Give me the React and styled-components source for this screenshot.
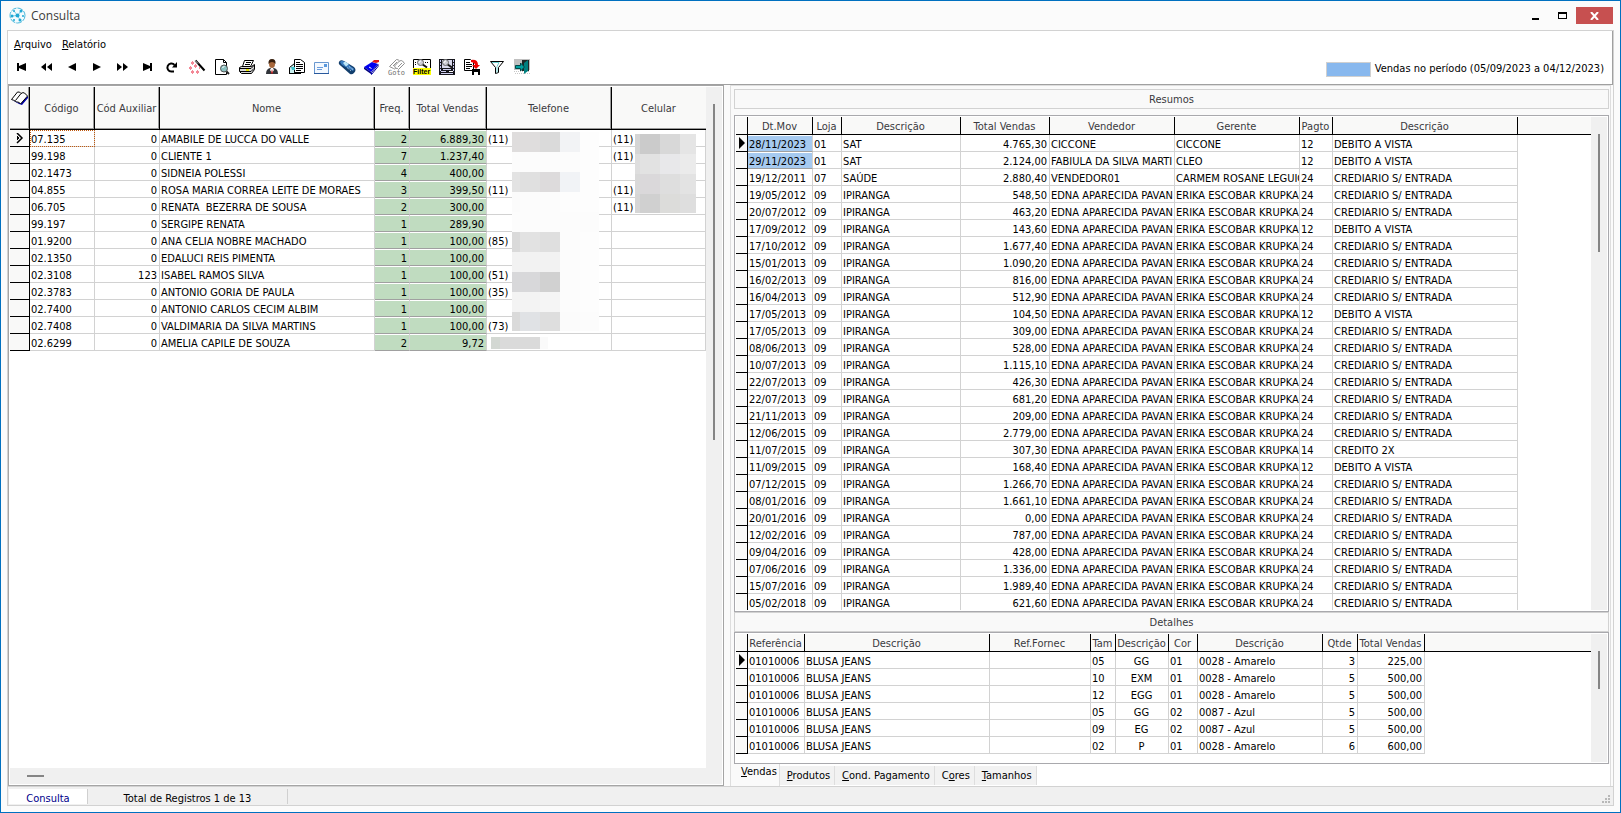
import { styled, createGlobalStyle } from 'styled-components';

const GlobalStyle = createGlobalStyle`
  *, *::before, *::after {
    box-sizing: border-box;
  }
  html, body, #root {
    height: 100%;
    margin: 0;
  }
  body {
    font-family: 'DejaVu Sans Condensed', 'Noto Sans', sans-serif;
    font-size: 11px;
    line-height: 16px;
    color: #000;
    background: #fbfbfb;
    overflow: hidden;
  }
  button {
    font: inherit;
    color: inherit;
    background: none;
    border: 0;
    padding: 0;
    margin: 0;
    cursor: default;
  }
`;

const Window = styled.div`
  display: flex;
  flex-direction: column;
  height: 100vh;
  padding: 0 6px 6px;
  border: 1px solid #0070c0;
  background: #fbfbfb;
`;

const TitleBar = styled.header`
  display: flex;
  align-items: center;
  flex: none;
  height: 29px;
  padding-left: 2px;
  gap: 5px;
`;

const Title = styled.h1`
  flex: 1;
  margin: 0;
  font-family: 'Open Sans', 'Noto Sans', sans-serif;
  font-size: 12px;
  font-weight: 400;
  color: #3c3c3c;
`;

const WindowButton = styled.button`
  display: flex;
  align-items: center;
  justify-content: center;
  width: ${({ $close }) => ($close ? 37 : 27)}px;
  height: 17px;
  background: ${({ $close }) => ($close ? '#c75050' : 'transparent')};
`;

const WindowButtons = styled.div`
  display: flex;
  padding-right: 1px;
`;

const Frame = styled.main`
  display: flex;
  flex-direction: column;
  flex: 1;
  min-height: 0;
  border: 1px solid #d2d2d2;
`;

const TopArea = styled.div`
  display: flex;
  justify-content: space-between;
  flex: none;
  height: 54px;
  background: #fff;
  border-right: 1px solid #a0a0a0;
  border-bottom: 1px solid #a0a0a0;
`;

const MenuBar = styled.nav`
  display: flex;
  gap: 10px;
  padding: 6px 0 1px 6px;
`;

const ToolBar = styled.div`
  display: flex;
`;

const ToolButton = styled.button`
  display: flex;
  align-items: center;
  justify-content: center;
  width: 25px;
  height: 26px;
  padding-left: 3px;
`;

const Legend = styled.div`
  display: flex;
  align-items: center;
  gap: 4px;
  padding: 23px 8px 0 0;
`;

const Swatch = styled.span`
  width: 45px;
  height: 15px;
  background: #88b8ee;
  border: 1px solid #d0d0d0;
`;

const Workspace = styled.div`
  display: flex;
  flex: 1;
  min-height: 0;
`;

const ClientPanel = styled.section`
  display: flex;
  flex-direction: column;
  flex: 0 0 716px;
  border: 1px solid #a5a5a5;
  padding: 1px;
  background: #fff;
`;

const SalesPanel = styled.section`
  display: flex;
  flex-direction: column;
  flex: 1;
  min-width: 0;
  margin: 0 2px 0 6px;
  padding: 3px 1px 0 3px;
  border: solid #dedede;
  border-width: 1px 1px 0;
  background: #fafafa;
`;

const PanelTitle = styled.h2`
  flex: none;
  height: 20px;
  margin: 0 0 ${({ $gap }) => $gap || 0}px;
  padding-top: 2px;
  border: 1px solid #d2d2d2;
  background: #f9f9f9;
  font-size: 11px;
  font-weight: 400;
  text-align: center;
  color: #3a3a40;
`;

const GridBox = styled.div`
  display: flex;
  flex: ${({ $height }) => ($height ? `0 0 ${$height}px` : '1')};
  min-height: 0;
  padding: 1px;
  border: 1px solid #a9a9ad;
  background: #fff;
`;

const GridArea = styled.div`
  position: relative;
  display: flex;
  flex: 1;
  min-height: 0;
`;

const GridView = styled.div`
  position: relative;
  flex: 1;
  min-width: 0;
  overflow: hidden;
`;

const Table = styled.table`
  width: 100%;
  table-layout: fixed;
  border-collapse: separate;
  border-spacing: 0;
`;

const Th = styled.th`
  height: ${({ $tall }) => ($tall ? 43 : 18)}px;
  padding: ${({ $mark }) => ($mark ? '4px 0 0' : '1px 1px 0 0')};
  overflow: hidden;
  background: #f9f9f8;
  border-right: ${({ $last }) => ($last ? '0' : '1px solid #000')};
  border-bottom: 1px solid #000;
  box-shadow: ${({ $tall, $last }) =>
    $tall ? `inset ${$last ? 0 : -1}px -1px #9a9a9a` : 'none'};
  font-weight: 400;
  line-height: 15px;
  white-space: nowrap;
  vertical-align: ${({ $mark }) => ($mark ? 'top' : 'middle')};
  color: #3a3a40;
`;

const cellColors = {
  green: '#c0dcc0',
  blue: '#a6caf0',
};

const Td = styled.td`
  height: 17px;
  padding: 3px 2px 0 1px;
  overflow: hidden;
  background: ${({ $tone }) => cellColors[$tone] || 'transparent'};
  border-right: 1px solid #d2d2d2;
  border-bottom: 1px solid ${({ $tone }) => ($tone ? '#a0a0a0' : '#d2d2d2')};
  box-shadow: ${({ $tone }) => ($tone ? 'inset 0 1px #fff' : 'none')};
  outline: ${({ $focused }) => ($focused ? '1px dotted #c05a10' : 'none')};
  outline-offset: -1px;
  line-height: 13px;
  text-align: ${({ $align }) => $align || 'left'};
  white-space: pre;
`;

const MarkCell = styled.td`
  height: 17px;
  padding: 0;
  background: #f9f9f8;
  border-right: 1px solid #000;
  border-bottom: 1px solid #000;
  line-height: 0;
  text-align: right;
`;

const ScrollTrack = styled.div`
  flex: none;
  width: 16px;
  padding: 17px 0 0 7px;
  background: #f0f0f0;
`;

const ScrollThumb = styled.div`
  width: 2px;
  height: ${({ $length }) => $length}px;
  background: #858585;
`;

const BottomTrack = styled.div`
  flex: none;
  height: 16px;
  padding: 7px 0 0 17px;
  background: #f0f0f0;
`;

const BottomThumb = styled.div`
  width: 17px;
  height: 2px;
  background: #858585;
`;

const Mosaic = styled.svg`
  position: absolute;
  left: ${({ $left }) => $left}px;
  top: ${({ $top }) => $top}px;
`;

const Tabs = styled.div`
  display: flex;
  flex: none;
  height: 22px;
  margin: 0 -1px 0 -3px;
  background: #fff;
`;

const Tab = styled.button`
  height: ${({ $active }) => ($active ? 22 : 19)}px;
  margin-top: ${({ $active }) => ($active ? 0 : 2)}px;
  padding: ${({ $active }) => ($active ? '0 2px 6px 10px' : '0 4px 0 7px')};
  border-right: 1px solid #dedede;
  background: ${({ $active }) => ($active ? '#fafafa' : '#f2f2f2')};
`;

const StatusBar = styled.footer`
  display: flex;
  flex: none;
  height: 19px;
  padding: 2px 0 1px 1px;
  border-top: 1px solid #d2d2d2;
  background: #f0f0f0;
`;

const StatusItem = styled.span`
  width: ${({ $width }) => $width}px;
  padding-top: 2px;
  line-height: 16px;
  border-right: 1px solid #d0d0d0;
  text-align: center;
  color: ${({ $current }) => ($current ? '#00008b' : '#000')};
  background: ${({ $current }) => ($current ? '#fff' : 'transparent')};
`;

const Grip = styled.svg`
  align-self: flex-end;
  margin: 0 2px 0 auto;
`;

const IconArt = styled.svg`
  flex: none;
  overflow: visible;
`;

const Icon = ({ children }) => (
  <IconArt width="16" height="16" viewBox="0 0 16 16" aria-hidden="true">
    {children}
  </IconArt>
);

const Lens = () => (
  <>
    <path d="M8 5l5 3.500" stroke="#111" strokeWidth="2" />
    <circle cx="6.500" cy="3.500" r="3" fill="#cdcdd6" stroke="#666" />
    <path d="M5 4q0-2 2-2" fill="none" stroke="#fff" />
  </>
);

const tools = [
  { label: 'Primeiro', art: <path d="M3 4h2v3l7-3v8l-7-3v3H3z" /> },
  { label: 'Voltar página', art: <path d="M2 8l5-4v8zM8 8l5-4v8z" /> },
  { label: 'Anterior', art: <path d="M4 8l8-4v8z" /> },
  { label: 'Próximo', art: <path d="M12 8L4 4v8z" /> },
  { label: 'Avançar página', art: <path d="M8 8L3 4v8zM14 8L9 4v8z" /> },
  { label: 'Último', art: <path d="M13 4h-2v3L4 4v8l7-3v3h2z" /> },
  {
    label: 'Atualizar',
    art: (
      <>
        <path d="M10 12.500H7.500a4 4 0 1 1 3-6.500" fill="none" stroke="#000" strokeWidth="2" />
        <path d="M13 3v5.500H8z" />
      </>
    ),
  },
  {
    label: 'Assistente',
    art: (
      <>
        <path d="M6.500 1.500l9 10" stroke="#000" strokeWidth="2" />
        <path d="M6 1.500l3 3" stroke="#d8d8d8" strokeWidth="1" />
        <path
          d="M3 3h1M2 4h1M4 4h1M3 5h1M6 6h1M5 7h1M7 7h1M6 8h1M1 8h1M0 9h1M2 9h1M1 10h1M10 9h1M3 12h1M2 13h1M4 13h1M3 14h1M8 12h1M7 13h1M9 13h1M8 14h1"
          stroke="#e8102c"
        />
      </>
    ),
  },
  {
    label: 'Visualizar',
    art: (
      <>
        <path d="M1.500.500h8l3 3v12h-11z" fill="#fff" stroke="#000" />
        <path d="M9.500.500v3h3" fill="none" stroke="#000" />
        <path d="M12 12l3 3" stroke="#222" strokeWidth="2" />
        <circle cx="10" cy="9.500" r="3.500" fill="#8ac0c0" stroke="#555" />
        <path d="M8.500 9q.500-1.500 2-1.500" fill="none" stroke="#fff" />
      </>
    ),
  },
  {
    label: 'Imprimir',
    art: (
      <>
        <path d="M5.500 1.500h9l-3 6h-8z" fill="#fff" stroke="#000" />
        <path d="M7 3.500h5M6 5.500h5" stroke="#000" />
        <path d="M.500 8.500l2-1h10l3-2v5l-3 4h-10l-2-2z" fill="#d8d8d8" stroke="#000" />
        <path d="M1 9.500h11l3-3M1 12.500h11l3-3" fill="none" stroke="#000" />
        <path d="M7 11h3" stroke="#e8e800" strokeWidth="2" />
      </>
    ),
  },
  {
    label: 'Cliente',
    art: (
      <>
        <path d="M2 15q0-5 4-6h4q4 1 4 6z" fill="#30343a" />
        <path d="M7 9h2l1 2-2 3-2-3z" fill="#fff" />
        <path d="M8 10l1 4-1 1-1-1z" fill="#c02020" />
        <ellipse cx="8" cy="5" rx="3" ry="4" fill="#a8683c" />
        <path d="M4.500 5Q4 0 8 0t3.500 5Q10 3 8 3T4.500 5z" fill="#38200f" />
      </>
    ),
  },
  {
    label: 'Relatório',
    art: (
      <>
        <path d="M.500 8.500l5-4v10h-5z" fill="#c8f0f0" stroke="#000" />
        <path d="M5.500.500h6l4 3v10h-10z" fill="#fff" stroke="#000" />
        <path d="M7 3.500h4M7 5.500h7M7 7.500h7M7 9.500h7M7 11.500h5" stroke="#000" />
        <path d="M0 14.500h12" stroke="#000" />
        <path d="M2 8h4v3H3z" fill="#40c0c8" />
      </>
    ),
  },
  {
    label: 'E-mail',
    art: (
      <>
        <path d="M.500 3.500h14v11H.500z" fill="#f4f9ff" stroke="#6a98d0" />
        <path d="M0 14.500h15" stroke="#28589c" />
        <path d="M3 8.500h6M3 10.500h5" stroke="#6a9cdc" />
        <path d="M10 5h3v3h-3z" fill="#5a98dc" />
      </>
    ),
  },
  {
    label: 'Telefone',
    art: (
      <>
        <path d="M0 3q1-3 5-1l10 6q3 3 0 6-2 2-4 1L2 7Q-1 5 0 3z" fill="#123e6c" />
        <path d="M1 3q2-2 4-.500L14 9q2 1 0 3L3 6z" fill="#3a7cc0" />
        <path d="M4 4l2-1.500L10 5 7 7.500z" fill="#c0e8f8" />
        <path d="M8 8.500l4 3.500M10 7.500l4 3" stroke="#c8e0f4" strokeDasharray="1 1" />
      </>
    ),
  },
  {
    label: 'Catálogo',
    art: (
      <>
        <path d="M0 8l8-5 6 2-7 8z" fill="#0000f0" />
        <path d="M0 8v2l7 5v-2z" fill="#000080" />
        <path d="M7.500 13.500l6.500-8v2l-6.500 8z" fill="#fff" stroke="#0000a0" />
        <path d="M8 3l2-2h5v2l-3 1z" fill="#e01818" />
        <path d="M5 8l2.500 1.500" stroke="#fff" />
      </>
    ),
  },
  {
    label: 'Ir para',
    art: (
      <>
        <path
          d="M.500 7.500l7-7q2 0 3 1.500 2-1 3 0l2 2.500-6 6q-1-2-3-1-1 1-2 0-2-1-4-2z"
          fill="#fff"
          stroke="#909090"
        />
        <path d="M10.500 2l-5 5 1 2M8 3L4 7M13 4L9 8" fill="none" stroke="#909090" />
        <text x="-1" y="16" fontSize="7" fontFamily="DejaVu Sans Mono" fill="#707070">
          Goto
        </text>
      </>
    ),
  },
  {
    label: 'Filtrar',
    art: (
      <>
        <path d="M-.500.500h17v9h-17z" fill="#fff" stroke="#000" />
        <path d="M1 3.500h2M1 5.500h2M11 3.500h4" stroke="#000" strokeDasharray="1 1" />
        <Lens />
        <path d="M-1 9h18v7H-1z" fill="#ff0" />
        <text x="-1" y="15" fontSize="7" fontWeight="700" fontFamily="Liberation Sans">
          Filter
        </text>
      </>
    ),
  },
  {
    label: 'Pesquisar',
    art: (
      <>
        <path d="M0 0h16v16H0z" fill="#15151c" />
        <path d="M1.500 1v11M14.500 1v11" stroke="#c8c8f0" strokeDasharray="2 1" />
        <path d="M3 1h10v8H3z" fill="#d8d8ec" />
        <Lens />
        <path d="M4 10.500h8M2 12.500h5M2 14.500h12" stroke="#d0d0f0" />
        <path d="M10 12.500h4" stroke="#fff" />
      </>
    ),
  },
  {
    label: 'Salvar',
    art: (
      <>
        <path d="M.500.500h6l3 3v8h-9z" fill="#fff" stroke="#000" />
        <path d="M2 3.500h4M2 5.500h6M2 7.500h6M2 9.500h4" stroke="#000" />
        <path d="M7 1q7-1 7 5h2l-4 4-4-4h3q0-2-4-3z" fill="#f00000" />
        <path d="M8 10h8v6H8z" />
        <path d="M10 13h4v3h-4z" fill="#fff" />
      </>
    ),
  },
  {
    label: 'Filtro',
    art: (
      <>
        <path d="M1.500 2.500h13l-5 6v5l-3 1v-6z" fill="#fff" stroke="#000" />
        <path d="M3 3.500h7l-2 4v6" fill="none" stroke="#70d0d0" />
      </>
    ),
  },
  {
    label: 'Sair',
    art: (
      <>
        <path d="M0 0h16v11H0z" fill="#c0c0c0" />
        <path d="M0 12.500h16M1 14.500h15" stroke="#c8c8c8" strokeDasharray="1 1" />
        <path d="M8 1h7v11H8z" fill="#202828" />
        <path d="M10 4l4-3v11l-4 3z" fill="#008080" />
        <path d="M1.500 6.500h5V4l4 4-4 4V9.500h-5z" fill="#00a0a0" stroke="#004848" />
      </>
    ),
  },
];

const phoneBlocks = [
  ['#dfdddd', '#dfdddd', '#dadada', '#f2f3f5', '#fdfdfd'],
  ['#fcfcfc', '#fcfcfc', '#fcfcfc', '#fcfcfc', '#fdfdfd'],
  ['#e3e3e3', '#e0e0e0', '#dddbdc', '#f1f3f6', '#fdfdfd'],
  ['#fbfbfb', '#fcfcfc', '#fcfcfc', '#fdfdfd', '#fdfdfd'],
  ['#fcfcfc', '#fcfcfc', '#fcfcfc', '#fcfcfc', '#fcfcfc'],
  ['#dadada', '#e2e2e2', '#dfdfdf', '#fcfcfc', '#fdfdfd'],
  ['#f2f2f2', '#f2f2f2', '#f2f2f2', '#fcfcfc', '#fdfdfd'],
  ['#d8d8da', '#d8d8da', '#d1d1d1', '#fcfcfc', '#fdfdfd'],
  ['#f3f3f3', '#f3f3f3', '#f5f5f5', '#fcfcfc', '#fdfdfd'],
  ['#dadada', '#e0e2e5', '#dedede', '#fbfbfb', '#fcfcfc'],
];

const mobileBlocks = [
  ['#d5d5d5', '#cbcbcb', '#d8d8d8', '#e5e5e5'],
  ['#dedede', '#e2e2e2', '#e8e8ea', '#ebebeb'],
  ['#d9d9d9', '#dad8da', '#dedede', '#e3e3e3'],
  ['#d6d6d6', '#d0d0d0', '#dcdcda', '#dedede'],
];

const HiddenNumbers = ({ left, top, columns, rows, height }) => (
  <Mosaic
    $left={left}
    $top={top}
    width={columns[columns.length - 1]}
    height={height}
    shapeRendering="crispEdges"
    aria-hidden="true"
  >
    {rows.map((row, y) =>
      row.map((fill, x) => (
        <rect
          key={`${x}-${y}`}
          x={columns[x]}
          y={y * 20}
          width={columns[x + 1] - columns[x]}
          height="20"
          fill={fill}
        />
      ))
    )}
  </Mosaic>
);

const clientColumns = [
  { title: 'Código', width: 65 },
  { title: 'Cód Auxiliar', width: 65, align: 'right' },
  { title: 'Nome', width: 215 },
  { title: 'Freq.', width: 35, align: 'right', tone: 'green' },
  { title: 'Total Vendas', width: 77, align: 'right', tone: 'green' },
  { title: 'Telefone', width: 125 },
  { title: 'Celular' },
];

const clients = [
  ['07.135', '0', 'AMABILE DE LUCCA DO VALLE', '2', '6.889,30', '(11)', '(11)'],
  ['99.198', '0', 'CLIENTE 1', '7', '1.237,40', '', '(11)'],
  ['02.1473', '0', 'SIDNEIA POLESSI', '4', '400,00', '', ''],
  ['04.855', '0', 'ROSA MARIA CORREA LEITE DE MORAES', '3', '399,50', '(11)', '(11)'],
  ['06.705', '0', 'RENATA  BEZERRA DE SOUSA', '2', '300,00', '', '(11)'],
  ['99.197', '0', 'SERGIPE RENATA', '1', '289,90', '', ''],
  ['01.9200', '0', 'ANA CELIA NOBRE MACHADO', '1', '100,00', '(85)', ''],
  ['02.1350', '0', 'EDALUCI REIS PIMENTA', '1', '100,00', '', ''],
  ['02.3108', '123', 'ISABEL RAMOS SILVA', '1', '100,00', '(51)', ''],
  ['02.3783', '0', 'ANTONIO GORIA DE PAULA', '1', '100,00', '(35)', ''],
  ['02.7400', '0', 'ANTONIO CARLOS CECIM ALBIM', '1', '100,00', '', ''],
  ['02.7408', '0', 'VALDIMARIA DA SILVA MARTINS', '1', '100,00', '(73)', ''],
  ['02.6299', '0', 'AMELIA CAPILE DE SOUZA', '2', '9,72', '', ''],
];

const salesColumns = [
  { title: 'Dt.Mov', width: 65 },
  { title: 'Loja', width: 29 },
  { title: 'Descrição', width: 119 },
  { title: 'Total Vendas', width: 89, align: 'right' },
  { title: 'Vendedor', width: 125 },
  { title: 'Gerente', width: 125 },
  { title: 'Pagto', width: 33 },
  { title: 'Descrição', width: 185 },
];

const payments = {
  12: 'DEBITO A VISTA',
  14: 'CREDITO 2X',
  24: 'CREDIARIO S/ ENTRADA',
};

const ipiranga = [
  ['19/05/2012', '548,50', 24],
  ['20/07/2012', '463,20', 24],
  ['17/09/2012', '143,60', 12],
  ['17/10/2012', '1.677,40', 24],
  ['15/01/2013', '1.090,20', 24],
  ['16/02/2013', '816,00', 24],
  ['16/04/2013', '512,90', 24],
  ['17/05/2013', '104,50', 12],
  ['17/05/2013', '309,00', 24],
  ['08/06/2013', '528,00', 24],
  ['10/07/2013', '1.115,10', 24],
  ['22/07/2013', '426,30', 24],
  ['22/07/2013', '681,20', 24],
  ['21/11/2013', '209,00', 24],
  ['12/06/2015', '2.779,00', 24],
  ['11/07/2015', '307,30', 14],
  ['11/09/2015', '168,40', 12],
  ['07/12/2015', '1.266,70', 24],
  ['08/01/2016', '1.661,10', 24],
  ['20/01/2016', '0,00', 24],
  ['12/02/2016', '787,00', 24],
  ['09/04/2016', '428,00', 24],
  ['07/06/2016', '1.336,00', 24],
  ['15/07/2016', '1.989,40', 24],
  ['05/02/2018', '621,60', 24],
];

const sales = [
  ['28/11/2023', '01', 'SAT', '4.765,30', 'CICCONE', 'CICCONE', 12, payments[12]],
  ['29/11/2023', '01', 'SAT', '2.124,00', 'FABIULA DA SILVA MARTI', 'CLEO', 12, payments[12]],
  ['19/12/2011', '07', 'SAÚDE', '2.880,40', 'VENDEDOR01', 'CARMEM ROSANE LEGUIÇ', 24, payments[24]],
  ...ipiranga.map(([date, total, code]) => [
    date,
    '09',
    'IPIRANGA',
    total,
    'EDNA APARECIDA PAVAN',
    'ERIKA ESCOBAR KRUPKA',
    code,
    payments[code],
  ]),
];

const detailColumns = [
  { title: 'Referência', width: 57 },
  { title: 'Descrição', width: 185 },
  { title: 'Ref.Fornec', width: 101 },
  { title: 'Tam', width: 25 },
  { title: 'Descrição', width: 53, align: 'center' },
  { title: 'Cor', width: 29 },
  { title: 'Descrição', width: 125 },
  { title: 'Qtde', width: 35, align: 'right' },
  { title: 'Total Vendas', width: 67, align: 'right' },
];

const details = [
  ['01010006', 'BLUSA JEANS', '', '05', 'GG', '01', '0028 - Amarelo', '3', '225,00'],
  ['01010006', 'BLUSA JEANS', '', '10', 'EXM', '01', '0028 - Amarelo', '5', '500,00'],
  ['01010006', 'BLUSA JEANS', '', '12', 'EGG', '01', '0028 - Amarelo', '5', '500,00'],
  ['01010006', 'BLUSA JEANS', '', '05', 'GG', '02', '0087 - Azul', '5', '500,00'],
  ['01010006', 'BLUSA JEANS', '', '09', 'EG', '02', '0087 - Azul', '5', '500,00'],
  ['01010006', 'BLUSA JEANS', '', '02', 'P', '01', '0028 - Amarelo', '6', '600,00'],
];

const BookIcon = () => (
  <svg width="17" height="15" viewBox="0 0 17 15" aria-hidden="true">
    <path d="M1 9l7 4 3 1 6-7V5L8 12z" fill="#0000b0" />
    <path
      d="M.500 8.500l6-7.500q2.500-.500 3.500 1.500 2-1.500 3.500-.500l3 3-7 8q-1-2-3-2-1 0-2.500-1-1.500-1-3.500-1.500z"
      fill="#fff"
      stroke="#000"
    />
    <path d="M10 2.500l-5.500 7" fill="none" stroke="#000" />
  </svg>
);

const ArrowMark = () => (
  <svg width="9" height="12" viewBox="0 0 9 12" aria-hidden="true">
    <path d="M1 0l6 6-6 6z" />
  </svg>
);

const OpenMark = () => (
  <svg width="13" height="11" viewBox="0 0 13 11" aria-hidden="true">
    <path d="M1 0l5 5-5 5" fill="none" stroke="#000" strokeWidth="1.500" />
    <path d="M1 3h1v1h1v2H2v1H1z" />
  </svg>
);

const Grid = ({ columns, rows, tall, cellTone, label }) => (
  <Table aria-label={label}>
    <colgroup>
      <col width={tall ? 20 : 12} />
      {columns.map((column, index) => (
        <col key={index} width={column.width} />
      ))}
      {!tall && <col />}
    </colgroup>
    <thead>
      <tr>
        <Th $tall={tall} $mark>
          {tall && <BookIcon />}
        </Th>
        {columns.map((column, index) => (
          <Th key={index} $tall={tall} $last={tall && index === columns.length - 1} scope="col">
            {column.title}
          </Th>
        ))}
        {!tall && <Th $last />}
      </tr>
    </thead>
    <tbody>
      {rows.map((row, y) => (
        <tr key={y}>
          <MarkCell>{y === 0 && (tall ? <OpenMark /> : <ArrowMark />)}</MarkCell>
          {row.map((value, x) => (
            <Td
              key={x}
              $align={columns[x].align}
              $tone={columns[x].tone || (cellTone && cellTone(x, y))}
              $focused={tall && x === 0 && y === 0}
            >
              {value}
            </Td>
          ))}
        </tr>
      ))}
    </tbody>
  </Table>
);

const LogoIcon = () => (
  <svg width="17" height="17" viewBox="0 0 17 17" aria-hidden="true">
    <circle cx="8.500" cy="8.500" r="7.500" fill="#f4fbfe" stroke="#48b8dc" strokeDasharray="6 1" />
    <path
      d="M8.500 8.500L5 4M8.500 8.500L12 4M8.500 8.500L11 13M8.500 8.500L3 9"
      stroke="#80cce4"
      strokeWidth="1"
    />
    <g fill="#1fa8d4">
      <circle cx="8.500" cy="8.500" r="2" />
      <circle cx="5" cy="4" r="1" />
      <circle cx="12" cy="4" r="1.500" />
      <circle cx="14" cy="9" r="1" />
      <circle cx="11" cy="13" r="1.500" />
      <circle cx="5" cy="13" r="1" />
      <circle cx="3" cy="9" r="1.500" />
    </g>
  </svg>
);

export default function App() {
  return (
    <>
      <GlobalStyle />
      <Window>
        <TitleBar>
          <LogoIcon />
          <Title>Consulta</Title>
          <WindowButtons>
            <WindowButton aria-label="Minimizar">
              <svg width="7" height="10">
                <path d="M0 7h7v2H0z" />
              </svg>
            </WindowButton>
            <WindowButton aria-label="Maximizar">
              <svg width="9" height="7">
                <path d="M0 0h9v7H0zM1 2v4h7V2z" fillRule="evenodd" />
              </svg>
            </WindowButton>
            <WindowButton $close aria-label="Fechar">
              <svg width="9" height="8">
                <path d="M1 0l7 8M8 0L1 8" stroke="#fff" strokeWidth="2" />
              </svg>
            </WindowButton>
          </WindowButtons>
        </TitleBar>

        <Frame>
          <TopArea>
            <div>
              <MenuBar>
                <button>
                  <u>A</u>rquivo
                </button>
                <button>
                  <u>R</u>elatório
                </button>
              </MenuBar>
              <ToolBar>
                {tools.map(({ label, art }) => (
                  <ToolButton key={label} aria-label={label}>
                    <Icon>{art}</Icon>
                  </ToolButton>
                ))}
              </ToolBar>
            </div>
            <Legend>
              <Swatch />
              Vendas no período (05/09/2023 a 04/12/2023)
            </Legend>
          </TopArea>

          <Workspace>
            <ClientPanel>
              <GridArea>
                <GridView>
                  <Grid label="Clientes" columns={clientColumns} rows={clients} tall />
                  <HiddenNumbers
                    left={502}
                    top={45}
                    columns={[0, 8, 28, 48, 68, 87]}
                    rows={phoneBlocks}
                    height={199}
                  />
                  <HiddenNumbers
                    left={625}
                    top={47}
                    columns={[0, 5, 25, 45, 61]}
                    rows={mobileBlocks}
                    height={79}
                  />
                  <HiddenNumbers
                    left={481}
                    top={250}
                    columns={[0, 9, 49, 57]}
                    rows={[['#d3d8d3', '#dadada', '#fafafa']]}
                    height={12}
                  />
                </GridView>
                <ScrollTrack>
                  <ScrollThumb $length={336} />
                </ScrollTrack>
              </GridArea>
              <BottomTrack>
                <BottomThumb />
              </BottomTrack>
            </ClientPanel>

            <SalesPanel>
              <PanelTitle $gap={6}>Resumos</PanelTitle>
              <GridBox>
                <GridView>
                  <Grid
                    label="Resumos"
                    columns={salesColumns}
                    rows={sales}
                    cellTone={(x, y) => (x === 0 && y < 2 ? 'blue' : undefined)}
                  />
                </GridView>
                <ScrollTrack>
                  <ScrollThumb $length={118} />
                </ScrollTrack>
              </GridBox>
              <PanelTitle>Detalhes</PanelTitle>
              <GridBox $height={132}>
                <GridView>
                  <Grid label="Detalhes" columns={detailColumns} rows={details} />
                </GridView>
                <ScrollTrack>
                  <ScrollThumb $length={38} />
                </ScrollTrack>
              </GridBox>
              <Tabs role="tablist">
                <Tab role="tab" $active aria-selected="true">
                  <u>V</u>endas
                </Tab>
                <Tab role="tab">
                  <u>P</u>rodutos
                </Tab>
                <Tab role="tab">
                  <u>C</u>ond. Pagamento
                </Tab>
                <Tab role="tab">
                  C<u>o</u>res
                </Tab>
                <Tab role="tab">
                  <u>T</u>amanhos
                </Tab>
              </Tabs>
            </SalesPanel>
          </Workspace>

          <StatusBar>
            <StatusItem $width={79} $current>
              Consulta
            </StatusItem>
            <StatusItem $width={200}>Total de Registros 1 de 13</StatusItem>
            <Grip width="9" height="9" aria-hidden="true">
              <path
                d="M6 0h2v2H6zM3 3h2v2H3zM6 3h2v2H6zM0 6h2v2H0zM3 6h2v2H3zM6 6h2v2H6z"
                fill="#b8b8b8"
              />
            </Grip>
          </StatusBar>
        </Frame>
      </Window>
    </>
  );
}
